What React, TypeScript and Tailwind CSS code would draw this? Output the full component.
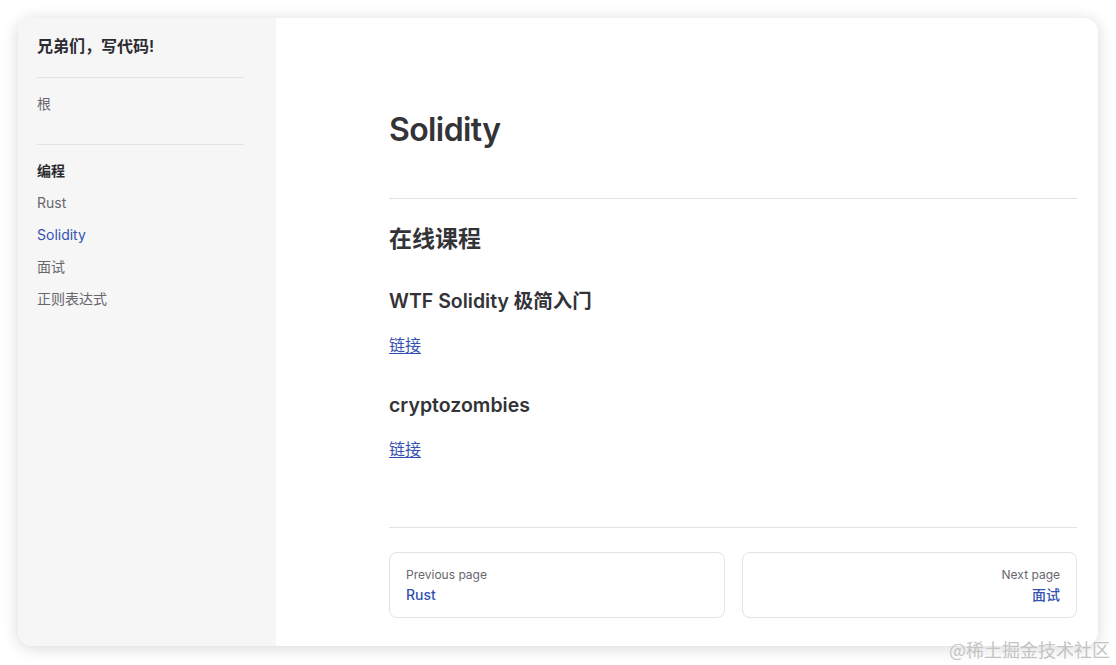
import React from 'react'

const font = { fontFamily: 'Inter, "Noto Sans CJK SC", sans-serif' }

const groups = ['Rust', 'Solidity', '面试', '正则表达式']

export default function App() {
  return (
    <div className="relative w-[1116px] h-[665px] bg-white p-[18px]" style={font}>
      <div className="flex w-[1080px] h-[628px] rounded-[14px] overflow-hidden bg-white shadow-[0_2px_16px_rgba(0,0,0,0.16)]">
        {/* sidebar */}
        <aside className="w-[258px] shrink-0 bg-[#f6f6f7] pl-[19px] pr-[32px] pt-[16px]">
          <div className="text-[16px] leading-6 font-semibold text-[#2c2c30]">兄弟们，写代码!</div>
          <div className="mt-[19px] border-t border-[#e2e2e3]" />
          <div className="mt-[10px] text-[14px] leading-8 text-[#67676c]">根</div>
          <div className="mt-[24px] border-t border-[#e2e2e3]" />
          <div className="mt-[10px] text-[14px] leading-8 font-semibold text-[#2c2c30]">编程</div>
          {groups.map((g) => (
            <div
              key={g}
              className={g === 'Solidity' ? 'text-[14px] leading-8 text-[#3451b2]' : 'text-[14px] leading-8 text-[#67676c]'}
            >
              {g}
            </div>
          ))}
        </aside>

        {/* main */}
        <main className="flex-1 pl-[113px] pr-[21px] pt-[92px] text-[#333338]">
          <h1 className="text-[32px] leading-10 font-semibold tracking-[-0.6px]">Solidity</h1>
          <div className="mt-[48px] border-t border-[#e2e2e3]" />
          <h2 className="mt-[24px] text-[23px] leading-8 font-semibold">在线课程</h2>
          <h3 className="mt-[32px] text-[19.5px] leading-7 font-semibold">WTF Solidity 极简入门</h3>
          <a href="#" className="block w-fit mt-[16px] text-[16px] leading-7 text-[#3451b2] underline underline-offset-2">链接</a>
          <h3 className="mt-[32px] text-[19.5px] leading-7 font-semibold">cryptozombies</h3>
          <a href="#" className="block w-fit mt-[16px] text-[16px] leading-7 text-[#3451b2] underline underline-offset-2">链接</a>
          <div className="mt-[64px] border-t border-[#e2e2e3]" />
          <div className="mt-[24px] grid grid-cols-2 gap-[17px]">
            <a href="#" className="block rounded-[8px] border border-[#e2e2e3] px-4 py-[12px]">
              <div className="text-[12px] leading-5 text-[#67676c]">Previous page</div>
              <div className="text-[14px] leading-5 font-medium text-[#3451b2]">Rust</div>
            </a>
            <a href="#" className="block rounded-[8px] border border-[#e2e2e3] px-4 py-[12px] text-right">
              <div className="text-[12px] leading-5 text-[#67676c]">Next page</div>
              <div className="text-[14px] leading-5 font-medium text-[#3451b2]">面试</div>
            </a>
          </div>
        </main>
      </div>

      <div
        className="absolute right-[6px] bottom-[6px] text-[18px] leading-5 text-[#c4c4c4]"
        style={{ fontFamily: '"Noto Sans CJK SC", serif' }}
      >
        @稀土掘金技术社区
      </div>
    </div>
  )
}
